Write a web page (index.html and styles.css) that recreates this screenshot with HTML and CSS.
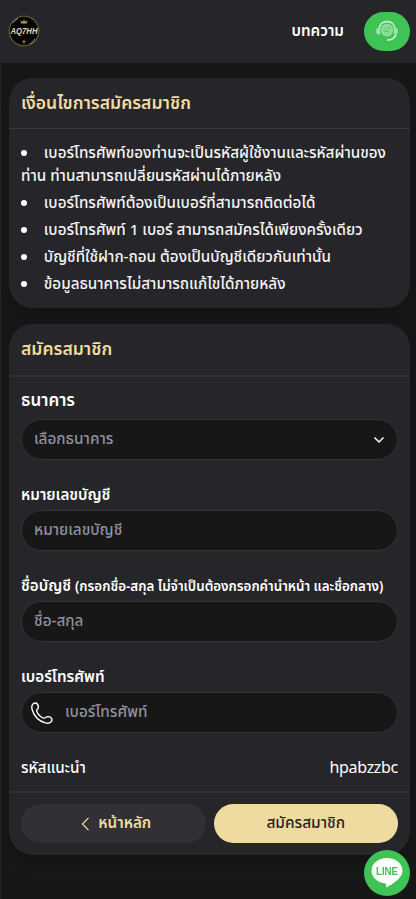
FILE: index.html
```html
<!DOCTYPE html>
<html lang="th">
<head>
<meta charset="utf-8">
<meta name="viewport" content="width=device-width, initial-scale=1">
<title>สมัครสมาชิก</title>
<link rel="stylesheet" href="styles.css">
</head>
<body>
<header class="topbar">
  <svg class="logo" viewBox="0 0 32 32">
    <circle cx="16" cy="16" r="14.8" fill="#050505" stroke="#56513b" stroke-width="1.4"/>
    <path d="M5 8A14 14 0 0 1 10 3.500M22 29A14 14 0 0 0 27 24" fill="none" stroke="#a4905a"/>
    <path d="M12.500 5l2 2 1.500-2.500L17.500 7l2-2-.7 3.500h-5.600z" fill="#b39b58"/>
    <path d="M16 25v4M14.500 26.500h3" stroke="#9c864c"/>
    <text x="16" y="19.200" text-anchor="middle" textLength="27" lengthAdjust="spacingAndGlyphs">AQ7HH</text>
  </svg>
  <nav class="nav">
    <a class="nav-link">บทความ</a>
    <a class="support">
      <svg viewBox="0 0 24 22" fill="none">
        <circle cx="12" cy="10" r="6.500" fill="#8bdc98"/>
        <path d="M4 9C4.500 4 8 1.500 12 1.500S19.500 4 20 9" stroke="#d8f6dd" stroke-width="1.500"/>
        <path d="M5 7.500C2.500 7 1 8.500 1 11s1.500 4 4 3.500zM19 7.500c2.500-.5 4 1 4 3.500s-1.500 4-4 3.500z" fill="#a1e3ad"/>
        <path d="M21 14.500c-1 3.500-4.500 5.500-9 5.500" stroke="#d8f6dd" stroke-width="1.500"/>
        <path d="M8.500 8l2 1.500M12 7.500l3 1M9 12l3-1 2 1" stroke="#58bd68"/>
      </svg>
    </a>
  </nav>
</header>
<main>
  <section class="card terms">
    <h2>เงื่อนไขการสมัครสมาชิก</h2>
    <ul>
      <li>เบอร์โทรศัพท์ของท่านจะเป็นรหัสผู้ใช้งานและรหัสผ่านของท่าน ท่านสามารถเปลี่ยนรหัสผ่านได้ภายหลัง</li>
      <li>เบอร์โทรศัพท์ต้องเป็นเบอร์ที่สามารถติดต่อได้</li>
      <li>เบอร์โทรศัพท์ 1 เบอร์ สามารถสมัครได้เพียงครั้งเดียว</li>
      <li>บัญชีที่ใช้ฝาก-ถอน ต้องเป็นบัญชีเดียวกันเท่านั้น</li>
      <li>ข้อมูลธนาคารไม่สามารถแก้ไขได้ภายหลัง</li>
    </ul>
  </section>
  <section class="card signup">
    <h2>สมัครสมาชิก</h2>
    <div class="fields">
      <div class="group">
        <div class="label bank">ธนาคาร</div>
        <div class="control select"><span>เลือกธนาคาร</span>
          <svg width="12" height="8" viewBox="0 0 12 8" fill="none" stroke="#fff" stroke-width="1.500"><path d="M1.500 1.500L6 6l4.500-4.500"/></svg>
        </div>
      </div>
      <div class="group">
        <div class="label">หมายเลขบัญชี</div>
        <div class="control"><span>หมายเลขบัญชี</span></div>
      </div>
      <div class="group">
        <div class="label">ชื่อบัญชี <small>(กรอกชื่อ-สกุล ไม่จำเป็นต้องกรอกคำนำหน้า และชื่อกลาง)</small></div>
        <div class="control"><span>ชื่อ-สกุล</span></div>
      </div>
      <div class="group">
        <div class="label">เบอร์โทรศัพท์</div>
        <div class="control phone">
          <svg width="22" height="22" viewBox="0 0 22 22" fill="none" stroke="#fff" stroke-width="1.400" stroke-linejoin="round"><path d="M2.200 1.800C3.500.8 5.400.6 6.300 2c.8 1.200 1.300 3 .9 4.100-.4 1.200-1.900 1.600-1.500 3 .8 2.900 4.200 6.200 7 7 1.400.4 2-.9 3.200-1.300 1.300-.4 3.200.1 4.300 1.100 1.300 1.200.8 3.100-.3 4.200-1.200 1.200-3.500 1.300-5.600.7C8.200 19 3 13.800 1.200 7.700.6 5.600.7 3 2.200 1.800z"/></svg>
          <span>เบอร์โทรศัพท์</span>
        </div>
      </div>
      <div class="referral"><span>รหัสแนะนำ</span><span class="code">hpabzzbc</span></div>
    </div>
    <footer class="actions">
      <a class="btn back"><svg width="9" height="14" viewBox="0 0 9 14" fill="none" stroke="#f0dc9f" stroke-width="1.200"><path d="M7.500 .8L1.500 7l6 6.200"/></svg>หน้าหลัก</a>
      <a class="btn submit">สมัครสมาชิก</a>
    </footer>
  </section>
</main>
<a class="line-badge">
  <svg viewBox="0 0 46 46">
    <circle cx="23" cy="23" r="23" fill="#3ec354"/>
    <path d="M23 8C14.200 8 7.500 13.700 7.500 20.700c0 6.300 5.500 11.500 13 12.500 2 .4 1.800 1.200 1.500 4.300 7-3.600 16.500-9.500 16.500-16.800C38.500 13.700 31.800 8 23 8z" fill="#fff"/>
    <text x="23" y="25" text-anchor="middle" textLength="22" lengthAdjust="spacingAndGlyphs">LINE</text>
  </svg>
</a>
</body>
</html>
```
FILE: styles.css
```css
* { box-sizing: border-box; }
body {
  margin: 0;
  min-height: 899px;
  background: #161817;
  border-left: 1px solid #252628;
  color: #fff;
  font: 500 15.200px/23px "Noto Sans Thai", "Noto Sans", sans-serif;
}
.topbar {
  height: 63px;
  padding: 0 6px 1px 7px;
  background: #26252a;
  display: flex;
  align-items: center;
  justify-content: space-between;
}
.logo { width: 32px; height: 32px; overflow: visible; }
.logo text { font: italic 700 9px "Liberation Sans", sans-serif; fill: #e2d7b2; }
.nav { display: flex; align-items: center; gap: 20px; }
.nav-link { font-weight: 600; }
.support {
  width: 46px;
  height: 39px;
  border-radius: 20px;
  background: #3ec354;
  display: flex;
  align-items: center;
  justify-content: center;
}
.support svg { width: 24px; height: 22px; }
main { padding: 15px 6px 0 8px; display: grid; gap: 16px; }
.card {
  background: #26252a;
  border-radius: 24px;
  box-shadow: 0 6px 14px rgba(0, 0, 0, .2);
}
.terms { height: 230px; }
.signup { height: 531px; }
h2 {
  margin: 0;
  height: 51px;
  padding: 1px 12px 0;
  border-bottom: 1px solid #39393d;
  color: #f0dc9f;
  font-size: 17.500px;
  font-weight: 600;
  line-height: 50px;
}
.signup h2 { height: 53px; border-bottom: 2px solid #302f34; }
ul { margin: 0; padding: 12.500px 12px 0; list-style: none; }
li { margin-bottom: 4.200px; color: #f5f5f5; font-size: 15.230px; }
li::before {
  content: "";
  display: inline-block;
  width: 6px;
  height: 6px;
  margin-right: 16.800px;
  border-radius: 50%;
  background: #fff;
  vertical-align: 2px;
}
.fields { height: 414px; padding: 11px 12px 0; }
.group { height: 91px; }
.label { height: 31px; padding-top: 4px; font-weight: 600; line-height: 25px; }
.label.bank { padding-top: 1px; font-size: 17px; }
.label small { font-size: 13.370px; }
.control {
  height: 41px;
  padding: 0 12px;
  border: 1px solid #333334;
  border-radius: 21px;
  background: #171717;
  color: #8f90a0;
  font-size: 15.300px;
  display: flex;
  align-items: center;
}
.select { justify-content: space-between; }
.phone { padding-left: 9px; gap: 12px; }
.referral { display: flex; justify-content: space-between; padding-top: 5px; }
.code { font-size: 16px; font-weight: 400; letter-spacing: -.3px; }
.actions {
  height: 64px;
  padding: 11px 12px 0;
  border-top: 2px solid #302f34;
  display: grid;
  grid-template-columns: 1fr 1fr;
  gap: 8px;
}
.btn {
  height: 39px;
  border-radius: 20px;
  display: flex;
  align-items: center;
  justify-content: center;
  gap: 8px;
}
.back { padding-left: 6px; background: #313035; color: #f0dc9f; font-weight: 600; }
.submit { background: #efdaa0; color: #26252a; font-size: 15.400px; }
.line-badge { position: fixed; right: 6px; bottom: 3px; width: 46px; height: 46px; }
.line-badge svg { display: block; width: 46px; height: 46px; }
.line-badge text { font: 700 11px "Liberation Sans", sans-serif; fill: #3ec354; }
```
